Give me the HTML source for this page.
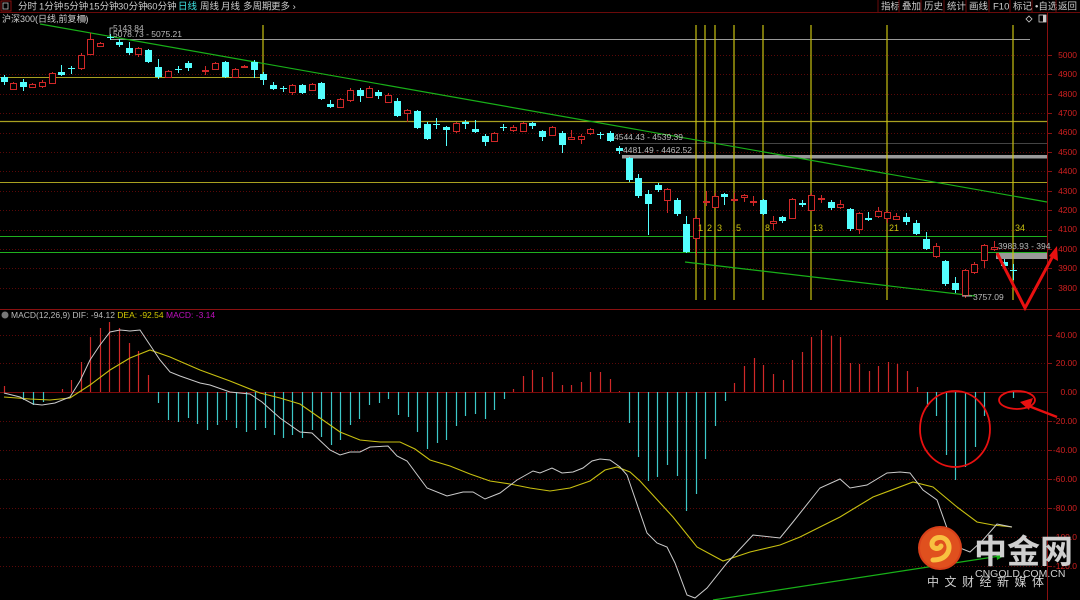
<!DOCTYPE html>
<html><head><meta charset="utf-8"><style>
html,body{margin:0;padding:0;background:#000;width:1080px;height:600px;overflow:hidden}
svg{display:block}
text{font-family:"Liberation Sans","Noto Sans CJK SC",sans-serif}
</style></head><body>
<svg id="s" width="1080" height="600" viewBox="0 0 1080 600" xmlns="http://www.w3.org/2000/svg">
<rect width="1080" height="600" fill="#000"/>
<line x1="0" y1="12.5" x2="1080" y2="12.5" stroke="#6a0a0a"/>
<rect x="1" y="1" width="10" height="10" fill="none" stroke="#8a1010"/>
<rect x="3" y="3" width="5" height="6" fill="none" stroke="#bbb" stroke-width="0.8"/>
<g font-size="9.5" fill="#ccc">
<text x="18" y="9.5">分时</text><text x="39" y="9.5">1分钟</text><text x="64" y="9.5">5分钟</text><text x="89" y="9.5">15分钟</text><text x="118" y="9.5">30分钟</text><text x="147" y="9.5">60分钟</text>
<text x="178" y="9.5" fill="#3ee0e0">日线</text><text x="200" y="9.5">周线</text><text x="221" y="9.5">月线</text><text x="243" y="9.5">多周期</text><text x="271" y="9.5">更多 ›</text>
<text x="881" y="9.5">指标</text><text x="902" y="9.5">叠加</text><text x="924" y="9.5">历史</text><text x="947" y="9.5">统计</text><text x="969" y="9.5">画线</text><text x="993" y="9.5">F10</text><text x="1013" y="9.5">标记</text><text x="1035" y="9.5">•自选</text><text x="1058" y="9.5">返回</text>
</g>
<g stroke="#6a0a0a"><line x1="878" y1="0" x2="878" y2="12"/><line x1="899" y1="0" x2="899" y2="12"/><line x1="921" y1="0" x2="921" y2="12"/><line x1="944" y1="0" x2="944" y2="12"/><line x1="966" y1="0" x2="966" y2="12"/><line x1="989" y1="0" x2="989" y2="12"/><line x1="1010" y1="0" x2="1010" y2="12"/><line x1="1032" y1="0" x2="1032" y2="12"/><line x1="1056" y1="0" x2="1056" y2="12"/></g>
<text x="2" y="22" font-size="9" fill="#ccc">沪深300(日线,前复权)</text>
<circle cx="83" cy="19" r="3.5" fill="#777"/>
<path d="M1026 19 l3 -3 l3 3 l-3 3z" fill="none" stroke="#ccc" stroke-width="0.8"/>
<rect x="1039" y="15" width="7" height="7" fill="none" stroke="#ccc" stroke-width="0.8"/><rect x="1043" y="15" width="3" height="7" fill="#ccc"/>
<line x1="1047.5" y1="13" x2="1047.5" y2="600" stroke="#8a1010"/>
<line x1="0" y1="309.5" x2="1080" y2="309.5" stroke="#8a1010"/>
<g id="grid"></g>
<g font-size="8.5" fill="#d02020" text-anchor="end">
<text x="1077" y="58">5000</text><text x="1077" y="77">4900</text><text x="1077" y="97">4800</text><text x="1077" y="116">4700</text><text x="1077" y="135">4600</text><text x="1077" y="155">4500</text><text x="1077" y="174">4400</text><text x="1077" y="194">4300</text><text x="1077" y="213">4200</text><text x="1077" y="232">4100</text><text x="1077" y="252">4000</text><text x="1077" y="271">3900</text><text x="1077" y="291">3800</text>
<text x="1077" y="338">40.00</text><text x="1077" y="366">20.00</text><text x="1077" y="395">0.00</text><text x="1077" y="424">-20.00</text><text x="1077" y="453">-40.00</text><text x="1077" y="482">-60.00</text><text x="1077" y="511">-80.00</text><text x="1077" y="540">-100.0</text><text x="1077" y="569">-120.0</text>
</g>
<line x1="110" y1="39.5" x2="1030" y2="39.5" stroke="#999"/>
<line x1="0" y1="77.5" x2="263" y2="77.5" stroke="#a8a020"/>
<line x1="0" y1="121.5" x2="1047" y2="121.5" stroke="#a8a020" stroke-width="1.2"/>
<line x1="620" y1="143.5" x2="1047" y2="143.5" stroke="#444"/>
<rect x="622" y="155" width="425" height="3.5" fill="#999"/>
<line x1="0" y1="182.5" x2="1047" y2="182.5" stroke="#a8a020"/>
<line x1="0" y1="236.5" x2="1047" y2="236.5" stroke="#1fb01f"/>
<line x1="0" y1="252.5" x2="1047" y2="252.5" stroke="#1fb01f"/>
<rect x="996" y="253" width="51" height="6" fill="#999"/>
<g stroke="#c8c010" stroke-width="1.2">
<line x1="263" y1="25" x2="263" y2="80"/>
<line x1="696" y1="25" x2="696" y2="300"/><line x1="705" y1="25" x2="705" y2="300"/><line x1="715" y1="25" x2="715" y2="300"/><line x1="734" y1="25" x2="734" y2="300"/><line x1="763" y1="25" x2="763" y2="300"/><line x1="811" y1="25" x2="811" y2="300"/><line x1="887" y1="25" x2="887" y2="300"/><line x1="1013" y1="25" x2="1013" y2="300"/>
</g>
<line x1="40" y1="24" x2="1047" y2="202" stroke="#18b018" stroke-width="1.2"/>
<line x1="685" y1="262" x2="975" y2="296" stroke="#18b018" stroke-width="1.2"/>
<g id="candles"></g>
<g font-size="9" fill="#c8c010">
<text x="698" y="231">1</text><text x="707" y="231">2</text><text x="717" y="231">3</text><text x="736" y="231">5</text><text x="765" y="231">8</text><text x="813" y="231">13</text><text x="889" y="231">21</text><text x="1015" y="231">34</text>
</g>
<g font-size="8.5" fill="#bbb">
<path d="M110 36 v-8 h3" stroke="#bbb" fill="none" stroke-width="0.8"/>
<text x="113" y="31">5143.84</text><text x="113" y="37">5078.73 - 5075.21</text>
<text x="614" y="140">4544.43 - 4539.39</text><text x="623" y="153">4481.49 - 4462.52</text>
<text x="998" y="249">3983.93 - 394</text><text x="973" y="300">3757.09</text>
</g>
<line x1="962" y1="296" x2="972" y2="296" stroke="#bbb"/>
<path d="M997 253 L1025 308 L1055 252" fill="none" stroke="#e81010" stroke-width="3"/>
<path d="M1049 256 L1057 246 L1058 261z" fill="#e81010"/>
<circle cx="5" cy="315" r="3.5" fill="#777"/>
<text x="11" y="318" font-size="8.5" fill="#bbb">MACD(12,26,9) DIF: -94.12 <tspan fill="#d0c800">DEA: -92.54</tspan> <tspan fill="#c010c0">MACD: -3.14</tspan></text>
<line x1="0" y1="392.5" x2="1047" y2="392.5" stroke="#7a0a0a"/>
<g id="hist"></g>
<polyline fill="none" stroke="#c8c010" stroke-width="1.1" points="4,397 30,399 50,400 70,398 90,385 110,370 130,358 150,350 170,357 200,370 230,381 260,393 280,398 300,404 320,418 340,432 360,440 380,442 400,442 415,449 430,460 450,466 470,474 490,481 510,484 530,488 550,491 570,488 590,481 605,470 617,467 630,472 640,481 673,517 697,547 723,561 750,552 780,545 800,537 840,517 873,497 913,482 933,487 957,507 977,522 993,525 1012,527"/>
<polyline fill="none" stroke="#ccc" stroke-width="1" points="4,393 20,397 33,404 42,405 55,403 70,397 80,381 90,360 100,345 110,332 120,330 130,331 140,330 150,345 160,360 170,372 180,376 200,383 210,385 230,392 250,394 262,402 280,418 300,432 312,433 330,450 340,455 350,452 360,452 370,447 388,446 397,456 407,461 427,488 447,496 463,492 473,492 485,499 500,493 517,480 533,471 540,473 552,468 562,473 573,472 583,468 592,461 600,459 610,460 620,467 627,475 647,533 657,543 667,547 675,563 687,595 695,598 707,588 727,563 753,535 780,538 793,522 820,488 840,479 850,488 867,485 887,473 900,472 910,473 923,490 937,500 947,528 960,548 970,552 983,540 997,524 1012,527"/>
<line x1="713" y1="600" x2="1000" y2="556" stroke="#18b018" stroke-width="1.2"/>
<path d="M996 552 L1004 556 L997 560z" fill="#18b018"/>
<ellipse cx="955" cy="429" rx="35" ry="38" fill="none" stroke="#e81010" stroke-width="1.8"/>
<ellipse cx="1017" cy="400" rx="18" ry="9" fill="none" stroke="#e81010" stroke-width="1.8"/>
<line x1="1057" y1="417" x2="1026" y2="405" stroke="#e81010" stroke-width="2.5"/>
<path d="M1020 402 L1033 398 L1029 410z" fill="#e81010"/>
<circle cx="940" cy="548" r="22" fill="#d8401a"/>
<circle cx="940" cy="548" r="20" fill="#e0501e"/>
<path d="M933 560 C948 560 952 548 947 541 C943 535 932 537 932 544 C932 549 939 550 941 546" fill="none" stroke="#f8c040" stroke-width="5" stroke-linecap="round"/>
<text x="974" y="563" font-size="33" font-weight="bold" fill="#cfcfcf" font-family="'Noto Sans CJK SC',sans-serif">中金网</text>
<text x="975" y="577" font-size="10.5" fill="#cfcfcf">CNGOLD.COM.CN</text>
<text x="927" y="586" font-size="12" fill="#cfcfcf" letter-spacing="5.5" font-family="'Noto Sans CJK SC',sans-serif">中文财经新媒体</text>
</svg>
<script>
var NS="http://www.w3.org/2000/svg";
function el(p,t,a){var e=document.createElementNS(NS,t);for(var k in a)e.setAttribute(k,a[k]);document.getElementById(p).appendChild(e);return e;}
for(var i=0;i<13;i++){var y=Math.round(55+19.4*i)+0.5;el("grid","line",{x1:0,y1:y,x2:1047,y2:y,stroke:"#5a0808","stroke-dasharray":"1,2"});el("grid","line",{x1:1047,y1:y,x2:1052,y2:y,stroke:"#8a1010"});}
[335,363,421,450,479,508,537,566].forEach(function(y){el("grid","line",{x1:0,y1:y+.5,x2:1047,y2:y+.5,stroke:"#5a0808","stroke-dasharray":"1,2"});el("grid","line",{x1:1047,y1:y+.5,x2:1052,y2:y+.5,stroke:"#8a1010"});});
var C=[[4,77,82,'c',75,85],[13,83,89,'r'],[23,82,87,'c',79,91],[32,84,87,'r'],[42,82,86,'r',80,88],[52,73,83,'r'],[61,72,75,'c',65,76],[71,68,69,'c',66,74],[81,55,68,'r',53,70],[90,39,54,'r',33,55],[100,43,46,'r'],[110,37,38,'c',34,40],[119,42,45,'c',39,47],[129,48,53,'c',42,55],[138,48,54,'r',47,57],[148,50,62,'c'],[158,67,77,'c',59,79],[168,71,77,'r'],[178,69,70,'c',66,73],[188,63,68,'c',61,71],[205,70,71,'r',66,75],[215,63,69,'r'],[225,62,77,'c'],[235,69,77,'r'],[244,66,67,'r'],[254,62,70,'c',60,78],[263,74,80,'c',72,85],[273,85,89,'c',82,90],[283,88,89,'c',86,92],[292,85,92,'r',84,95],[302,85,93,'c'],[312,84,90,'r'],[321,83,99,'c'],[330,104,107,'c',100,108],[340,99,107,'r'],[350,90,100,'r',88,102],[360,90,96,'c',88,102],[369,88,97,'r',86,98],[378,92,96,'c',90,99],[388,95,102,'r',93,103],[397,101,116,'c',98,117],[407,110,113,'r',109,122],[417,111,128,'c'],[427,124,139,'c',122,140],[436,124,125,'c',118,129],[446,127,130,'c',126,146],[456,123,131,'r',122,133],[465,122,124,'c',120,129],[475,129,132,'c',120,133],[485,136,142,'c',134,146],[494,133,141,'r'],[503,127,128,'c',124,131],[513,127,130,'r',125,132],[523,123,131,'r'],[532,123,126,'c',122,129],[542,131,137,'c',130,141],[552,127,135,'r'],[562,133,145,'c',131,153],[571,137,139,'r',130,140],[581,136,139,'r',134,144],[590,129,133,'r',128,135],[600,134,135,'c',132,139],[610,133,141,'c',131,142],[619,148,151,'c',146,154],[629,158,180,'c',157,182],[638,178,196,'c',174,198],[648,194,204,'c',190,235],[658,185,190,'c',183,192],[667,189,200,'r',188,213],[677,200,214,'c',198,216],[686,224,252,'c',216,253],[696,218,238,'r',216,255],[706,201,202,'r',191,206],[715,196,207,'r',193,208],[724,194,197,'c',193,205],[734,199,200,'r',193,202],[744,195,197,'r',194,202],[753,201,202,'r',196,206],[763,200,214,'c',199,215],[773,221,223,'r',216,230],[782,217,221,'c',216,223],[792,199,218,'r'],[802,203,205,'c',200,207],[811,195,210,'r',193,211],[821,198,199,'r',195,203],[831,202,208,'c',200,210],[840,204,207,'r',200,209],[850,209,229,'c',208,231],[859,213,229,'r',212,234],[868,218,220,'c',212,221],[878,211,216,'r',207,218],[887,212,218,'r',211,223],[896,216,219,'r',213,220],[906,217,222,'c',213,225],[916,223,234,'c',220,235],[926,239,249,'c',232,250],[936,246,256,'r',243,258],[945,261,284,'c',260,286],[955,283,290,'c',277,293],[965,270,295,'r',269,298],[974,264,272,'r',262,274],[984,245,260,'r',244,268],[994,247,249,'r',241,251],[1004,262,266,'c',259,268],[1013,270,271,'c',264,280]];
C.forEach(function(c){var col=c[3]=='c'?'#54ffff':'#d02828';var wt=c[4]||c[1]-1,wb=c[5]||c[2]+1;
el("candles","line",{x1:c[0]+.5,y1:wt,x2:c[0]+.5,y2:wb,stroke:col});
var h=Math.max(1,c[2]-c[1]);
if(c[3]=='c')el("candles","rect",{x:c[0]-3,y:c[1],width:7,height:h,fill:col});
else el("candles","rect",{x:c[0]-2.5,y:c[1]+.5,width:6,height:h,fill:"#000",stroke:col});});
var H=[[4,386],[23,400],[33,405],[43,402],[62,389],[71,380],[81,362],[90,337],[100,328],[109,322],[119,328],[129,343],[138,351],[148,375],[158,403],[168,420],[178,422],[188,418],[197,424],[207,430],[217,425],[226,420],[236,428],[246,432],[255,430],[265,428],[274,435],[283,438],[292,435],[302,438],[312,430],[321,437],[331,445],[340,440],[350,425],[359,419],[369,405],[379,403],[388,399],[398,415],[408,417],[417,432],[427,449],[437,443],[446,440],[456,426],[465,416],[475,414],[485,419],[494,410],[504,399],[513,389],[523,376],[532,370],[542,377],[552,372],[562,385],[571,385],[581,382],[590,372],[600,372],[610,379],[619,391],[629,423],[638,457],[648,481],[657,477],[667,465],[677,476],[686,511],[696,494],[705,459],[715,426],[725,401],[734,383],[744,366],[754,358],[763,365],[773,374],[783,380],[792,360],[802,352],[811,337],[821,330],[831,336],[840,337],[850,363],[859,364],[869,371],[878,366],[888,362],[897,364],[907,371],[917,387],[927,407],[936,416],[946,455],[955,480],[965,467],[975,447],[984,416],[1013,398]];
H.forEach(function(h){var up=h[1]<392;el("hist","line",{x1:h[0]+.5,y1:392,x2:h[0]+.5,y2:h[1],stroke:up?'#d02828':'#3cc8c8','stroke-width':1.2});});
</script>
</body></html>
